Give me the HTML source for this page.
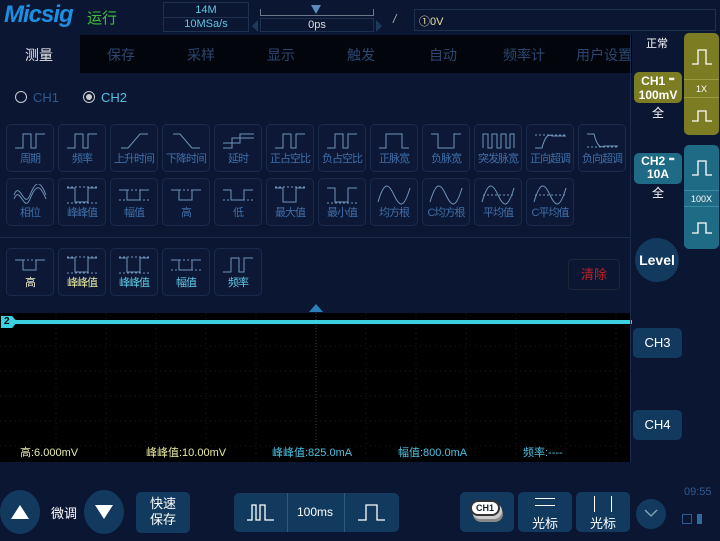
<!DOCTYPE html>
<html><head><meta charset="utf-8"><style>
*{margin:0;padding:0;box-sizing:border-box}
body{width:720px;height:541px;background:#0b1633;font-family:"Liberation Sans","Noto Sans CJK SC",sans-serif;position:relative;overflow:hidden;color:#fff}
.a{position:absolute}
.btn{position:absolute;width:48px;height:48px;border:1px solid #1a2a4c;border-radius:5px;background:#0c1836;text-align:center;font-size:11px;color:#3f6fa8;line-height:1}
.btn svg{display:block;margin:5px auto 2px}
.btn span{letter-spacing:-1px}
.tab{position:absolute;top:45px;font-size:14px;color:#2a4870}
.meas{position:absolute;top:444px;font-size:11px}
.rbox{position:absolute;border-radius:5px;font-weight:bold;text-align:center}
</style></head><body>
<div class="a" style="left:4px;top:1px;font-size:24px;font-weight:bold;font-style:italic;color:#1e8fe0;letter-spacing:-1px">Micsig</div>
<div class="a" style="left:87px;top:7px;font-size:15px;color:#3fbf3f">运行</div>
<div class="a" style="left:163px;top:2px;width:86px;height:30px;border:1px solid #1d3050;font-size:11px;color:#5fc7e0;text-align:center;line-height:14px">14M<br>10MSa/s<div style="position:absolute;left:0;right:0;top:14px;border-top:1px solid #1d3050"></div></div>
<div class="a" style="left:260px;top:9px;width:114px;height:7px;border:1px solid #6a7a8a;border-top:none;border-bottom:1px solid #6a7a8a"></div>
<div class="a" style="left:311px;top:5px;width:0;height:0;border-left:5px solid transparent;border-right:5px solid transparent;border-top:9px solid #5a8cb8"></div>
<div class="a" style="left:260px;top:18px;width:114px;height:14px;border:1px solid #1d3050;font-size:11px;color:#ddd;text-align:center;line-height:12px">0ps</div>
<div class="a" style="left:252px;top:20px;border-top:6px solid transparent;border-bottom:6px solid transparent;border-right:6px solid #1d3a5c"></div>
<div class="a" style="left:376px;top:20px;border-top:6px solid transparent;border-bottom:6px solid transparent;border-left:6px solid #1d3a5c"></div>
<div class="a" style="left:393px;top:12px;font-size:12px;color:#aaa;font-style:italic">/</div>
<div class="a" style="left:414px;top:9px;width:302px;height:22px;border:1px solid #1d3050;font-size:11px;color:#e8e0a0;padding:3px 4px">①0V</div>
<div class="a" style="left:80px;top:35px;width:552px;height:38px;background:#02050c"></div>
<div class="tab" style="left:25px;color:#e8e8e8">测量</div>
<div class="tab" style="left:107px">保存</div>
<div class="tab" style="left:187px">采样</div>
<div class="tab" style="left:267px">显示</div>
<div class="tab" style="left:347px">触发</div>
<div class="tab" style="left:429px">自动</div>
<div class="tab" style="left:503px">频率计</div>
<div class="tab" style="left:576px">用户设置</div>
<div class="a" style="left:15px;top:91px;width:12px;height:12px;border:1.5px solid #ccc;border-radius:50%"></div>
<div class="a" style="left:33px;top:90px;font-size:13px;color:#2f5a90">CH1</div>
<div class="a" style="left:83px;top:91px;width:12px;height:12px;border:1.5px solid #ccc;border-radius:50%"><div style="margin:2px;width:6px;height:6px;background:#ccc;border-radius:50%"></div></div>
<div class="a" style="left:101px;top:90px;font-size:13px;color:#4fc0e0">CH2</div>
<div class="btn" style="left:6px;top:124px"><svg width="36" height="22"><path d="M3 18H11V4H19V18H24V4H33" fill="none" stroke="#6f93b8"/></svg><span>周期</span></div>
<div class="btn" style="left:58px;top:124px"><svg width="36" height="22"><path d="M3 18H11V4H19V18H24V4H33" fill="none" stroke="#6f93b8"/></svg><span>频率</span></div>
<div class="btn" style="left:110px;top:124px"><svg width="36" height="22"><path d="M5 18H12L24 4H32" fill="none" stroke="#6f93b8"/></svg><span>上升时间</span></div>
<div class="btn" style="left:162px;top:124px"><svg width="36" height="22"><path d="M5 4H12L24 18H32" fill="none" stroke="#6f93b8"/></svg><span>下降时间</span></div>
<div class="btn" style="left:214px;top:124px"><svg width="36" height="22"><path d="M3 18H12V8H34M3 13H20V4H34" fill="none" stroke="#6f93b8"/></svg><span>延时</span></div>
<div class="btn" style="left:266px;top:124px"><svg width="36" height="22"><path d="M3 18H11V4H19V18H24V4H33" fill="none" stroke="#6f93b8"/></svg><span>正占空比</span></div>
<div class="btn" style="left:318px;top:124px"><svg width="36" height="22"><path d="M3 18H11V4H19V18H24V4H33" fill="none" stroke="#6f93b8"/></svg><span>负占空比</span></div>
<div class="btn" style="left:370px;top:124px"><svg width="36" height="22"><path d="M3 18H10V4H26V18H33" fill="none" stroke="#6f93b8"/></svg><span>正脉宽</span></div>
<div class="btn" style="left:422px;top:124px"><svg width="36" height="22"><path d="M3 4H10V18H26V4H33" fill="none" stroke="#6f93b8"/></svg><span>负脉宽</span></div>
<div class="btn" style="left:474px;top:124px"><svg width="36" height="22"><path d="M3 18V4H8V18H12V4H17V18H21V4H26V18H30V4H34V18" fill="none" stroke="#6f93b8"/></svg><span>突发脉宽</span></div>
<div class="btn" style="left:526px;top:124px"><svg width="36" height="22"><path d="M3 18H10Q14 2 20 6H34" fill="none" stroke="#6f93b8"/><path d="M3 5H34" stroke="#6f93b8" stroke-dasharray="2 2"/></svg><span>正向超调</span></div>
<div class="btn" style="left:578px;top:124px"><svg width="36" height="22"><path d="M3 4H10Q14 20 20 16H34" fill="none" stroke="#6f93b8"/><path d="M3 17H34" stroke="#6f93b8" stroke-dasharray="2 2"/></svg><span>负向超调</span></div>
<div class="btn" style="left:6px;top:178px"><svg width="36" height="22"><path d="M2 11C8 -4 12 26 18 11S28 -4 34 11M2 15C8 0 12 30 18 15S28 0 34 15" fill="none" stroke="#6f93b8"/></svg><span>相位</span></div>
<div class="btn" style="left:58px;top:178px"><svg width="36" height="22"><path d="M3 4H11V18H24V4H33" fill="none" stroke="#6f93b8"/><path d="M3 3H34M3 19H34" stroke="#6f93b8" stroke-dasharray="2 2"/></svg><span>峰峰值</span></div>
<div class="btn" style="left:110px;top:178px"><svg width="36" height="22"><path d="M3 6H11V16H24V6H33" fill="none" stroke="#6f93b8"/><path d="M3 6H34M3 16H34" stroke="#6f93b8" stroke-dasharray="2 2"/></svg><span>幅值</span></div>
<div class="btn" style="left:162px;top:178px"><svg width="36" height="22"><path d="M3 6H11V16H24V6H33" fill="none" stroke="#6f93b8"/><path d="M3 6H34" stroke="#6f93b8" stroke-dasharray="2 2"/></svg><span>高</span></div>
<div class="btn" style="left:214px;top:178px"><svg width="36" height="22"><path d="M3 6H11V16H24V6H33" fill="none" stroke="#6f93b8"/><path d="M3 16H34" stroke="#6f93b8" stroke-dasharray="2 2"/></svg><span>低</span></div>
<div class="btn" style="left:266px;top:178px"><svg width="36" height="22"><path d="M3 4H11V18H24V4H33" fill="none" stroke="#6f93b8"/><path d="M3 3H34" stroke="#6f93b8" stroke-dasharray="2 2"/></svg><span>最大值</span></div>
<div class="btn" style="left:318px;top:178px"><svg width="36" height="22"><path d="M3 4H11V18H24V4H33" fill="none" stroke="#6f93b8"/><path d="M3 19H34" stroke="#6f93b8" stroke-dasharray="2 2"/></svg><span>最小值</span></div>
<div class="btn" style="left:370px;top:178px"><svg width="36" height="22"><path d="M2 18C8 -2 12 -2 18 11S28 24 34 4" fill="none" stroke="#6f93b8"/></svg><span>均方根</span></div>
<div class="btn" style="left:422px;top:178px"><svg width="36" height="22"><path d="M2 18C8 -2 12 -2 18 11S28 24 34 4" fill="none" stroke="#6f93b8"/></svg><span>C均方根</span></div>
<div class="btn" style="left:474px;top:178px"><svg width="36" height="22"><path d="M2 18C8 -2 12 -2 18 11S28 24 34 4" fill="none" stroke="#6f93b8"/><path d="M3 11H34" stroke="#6f93b8" stroke-dasharray="2 2"/></svg><span>平均值</span></div>
<div class="btn" style="left:526px;top:178px"><svg width="36" height="22"><path d="M2 18C8 -2 12 -2 18 11S28 24 34 4" fill="none" stroke="#6f93b8"/><path d="M3 11H34" stroke="#6f93b8" stroke-dasharray="2 2"/></svg><span>C平均值</span></div>
<div class="a" style="left:0;top:237px;width:630px;border-top:1px solid #1a2a4c"></div>
<div class="btn" style="left:6px;top:248px;color:#f0f0d0"><svg width="36" height="22"><path d="M3 6H11V16H24V6H33" fill="none" stroke="#6f93b8"/><path d="M3 6H34" stroke="#6f93b8" stroke-dasharray="2 2"/></svg><span>高</span></div>
<div class="btn" style="left:58px;top:248px;color:#e8e8a0"><svg width="36" height="22"><path d="M3 4H11V18H24V4H33" fill="none" stroke="#6f93b8"/><path d="M3 3H34M3 19H34" stroke="#6f93b8" stroke-dasharray="2 2"/></svg><span>峰峰值</span></div>
<div class="btn" style="left:110px;top:248px;color:#5fc7e0"><svg width="36" height="22"><path d="M3 4H11V18H24V4H33" fill="none" stroke="#6f93b8"/><path d="M3 3H34M3 19H34" stroke="#6f93b8" stroke-dasharray="2 2"/></svg><span>峰峰值</span></div>
<div class="btn" style="left:162px;top:248px;color:#5fc7e0"><svg width="36" height="22"><path d="M3 6H11V16H24V6H33" fill="none" stroke="#6f93b8"/><path d="M3 6H34M3 16H34" stroke="#6f93b8" stroke-dasharray="2 2"/></svg><span>幅值</span></div>
<div class="btn" style="left:214px;top:248px;color:#5fc7e0"><svg width="36" height="22"><path d="M3 18H11V4H19V18H24V4H33" fill="none" stroke="#6f93b8"/></svg><span>频率</span></div>
<div class="a" style="left:568px;top:259px;width:52px;height:31px;border:1px solid #1f2438;border-radius:4px;color:#c02020;font-size:13px;text-align:center;line-height:29px">清除</div>
<div class="a" style="left:309px;top:304px;border-left:7px solid transparent;border-right:7px solid transparent;border-bottom:8px solid #2d7fb8"></div>
<div class="a" style="left:0;top:313px;width:631px;height:149px;background:#000"></div>
<svg class="a" style="left:0;top:313px" width="631" height="149">
<g stroke="#1e1e1e" stroke-dasharray="1 4">
<path d="M56 0V149M106 0V149M156 0V149M206 0V149M256 0V149M366 0V149M416 0V149M466 0V149M516 0V149M566 0V149M616 0V149"/>
<path d="M0 33H631M0 58H631M0 83H631M0 108H631M0 133H631"/>
</g>
<path d="M316 0V149" stroke="#3a3a3a" stroke-dasharray="1 2"/>
</svg>
<div class="a" style="left:8px;top:320px;width:624px;height:4px;background:#3ad0e0"></div>
<div class="a" style="left:1px;top:316px;width:16px;height:12px;background:#3ad0e0;clip-path:polygon(0 0,70% 0,100% 50%,70% 100%,0 100%);font-size:10px;color:#000;padding-left:3px;line-height:12px;font-weight:bold">2</div>
<div class="meas" style="left:20px;color:#e8e8b0">高:6.000mV</div>
<div class="meas" style="left:146px;color:#e8e8a0">峰峰值:10.00mV</div>
<div class="meas" style="left:272px;color:#4fc0e0">峰峰值:825.0mA</div>
<div class="meas" style="left:398px;color:#4fc0e0">幅值:800.0mA</div>
<div class="meas" style="left:523px;color:#4fc0e0">频率:----</div>
<div class="a" style="left:630px;top:35px;height:427px;border-left:1px solid #1a2a4c"></div>
<div class="a" style="left:646px;top:35px;font-size:11px;color:#fff">正常</div>
<div class="a" style="left:684px;top:33px;width:35px;height:102px;background:#7c7c22;border-radius:5px"></div>
<svg class="a" style="left:690px;top:47px" width="24" height="20"><path d="M2 17H8V3H16V17H22" fill="none" stroke="#fff" stroke-width="1.3"/></svg>
<div class="a" style="left:684px;top:79px;width:35px;border-top:1px solid #9a9a40;font-size:9px;color:#fff;text-align:center;padding-top:4px">1X</div>
<div class="a" style="left:684px;top:97px;width:35px;border-top:1px solid #9a9a40"></div>
<svg class="a" style="left:690px;top:108px" width="24" height="16"><path d="M2 13H8V3H16V13H22" fill="none" stroke="#fff" stroke-width="1.3"/></svg>
<div class="rbox" style="left:634px;top:72px;width:48px;height:31px;background:#7c7c22;font-size:12px;line-height:14px;padding-top:2px">CH1 ⁼<br>100mV</div>
<div class="a" style="left:652px;top:104px;font-size:12px">全</div>
<div class="a" style="left:684px;top:145px;width:35px;height:104px;background:#1f6a85;border-radius:5px"></div>
<svg class="a" style="left:690px;top:158px" width="24" height="20"><path d="M2 17H8V3H16V17H22" fill="none" stroke="#fff" stroke-width="1.3"/></svg>
<div class="a" style="left:684px;top:190px;width:35px;border-top:1px solid #3a8aa5;font-size:9px;color:#fff;text-align:center;padding-top:3px">100X</div>
<div class="a" style="left:684px;top:206px;width:35px;border-top:1px solid #3a8aa5"></div>
<svg class="a" style="left:690px;top:220px" width="24" height="16"><path d="M2 13H8V3H16V13H22" fill="none" stroke="#fff" stroke-width="1.3"/></svg>
<div class="rbox" style="left:634px;top:153px;width:48px;height:31px;background:#1f6a85;font-size:12px;line-height:13px;padding-top:2px">CH2 ⁼<br>10A</div>
<div class="a" style="left:652px;top:184px;font-size:12px">全</div>
<div class="a" style="left:635px;top:238px;width:44px;height:44px;border-radius:50%;background:#123a5e;text-align:center;font-size:14px;font-weight:bold;line-height:44px">Level</div>
<div class="rbox" style="left:633px;top:328px;width:49px;height:30px;background:#123a5e;font-size:13px;font-weight:normal;line-height:30px">CH3</div>
<div class="rbox" style="left:633px;top:410px;width:49px;height:30px;background:#123a5e;font-size:13px;font-weight:normal;line-height:30px">CH4</div>
<div class="a" style="left:0;top:490px;width:40px;height:44px;border-radius:50%;background:#123a5e"></div>
<div class="a" style="left:11px;top:505px;border-left:9px solid transparent;border-right:9px solid transparent;border-bottom:14px solid #fff"></div>
<div class="a" style="left:51px;top:503px;font-size:13px">微调</div>
<div class="a" style="left:84px;top:490px;width:40px;height:44px;border-radius:50%;background:#123a5e"></div>
<div class="a" style="left:95px;top:505px;border-left:9px solid transparent;border-right:9px solid transparent;border-top:14px solid #fff"></div>
<div class="a" style="left:136px;top:492px;width:54px;height:41px;border-radius:5px;background:#123a5e;font-size:13px;text-align:center;line-height:16px;padding-top:4px">快速<br>保存</div>
<div class="a" style="left:234px;top:493px;width:165px;height:39px;border-radius:5px;background:#123a5e"></div>
<div class="a" style="left:287px;top:493px;height:39px;border-left:1px solid #2a5a80"></div>
<div class="a" style="left:344px;top:493px;height:39px;border-left:1px solid #2a5a80"></div>
<svg class="a" style="left:246px;top:502px" width="30" height="20"><path d="M1 18H6V3H10V18H14V3H19V18H28" fill="none" stroke="#fff" stroke-width="1.3"/></svg>
<div class="a" style="left:297px;top:505px;font-size:12px">100ms</div>
<svg class="a" style="left:357px;top:502px" width="30" height="20"><path d="M1 18H9V3H20V18H28" fill="none" stroke="#fff" stroke-width="1.3"/></svg>
<div class="a" style="left:460px;top:492px;width:54px;height:40px;border-radius:5px;background:#123a5e"></div>
<div class="a" style="left:470px;top:500px;width:30px;height:16px;border-radius:8px;background:#fff;border:2px solid #333;color:#123;font-size:9px;font-weight:bold;text-align:center;line-height:12px;box-shadow:2px 3px 0 #ccc,3px 6px 0 #888">CH1</div>
<div class="a" style="left:518px;top:492px;width:54px;height:40px;border-radius:5px;background:#123a5e;text-align:center;font-size:13px;padding-top:21px">光标</div>
<div class="a" style="left:535px;top:498px;width:20px;border-top:1.5px solid #fff;height:8px;border-bottom:1.5px solid #fff"></div>
<div class="a" style="left:576px;top:492px;width:54px;height:40px;border-radius:5px;background:#123a5e;text-align:center;font-size:13px;padding-top:21px">光标</div>
<div class="a" style="left:594px;top:496px;width:18px;height:16px;border-left:1.5px solid #fff;border-right:1.5px solid #fff"></div>
<div class="a" style="left:636px;top:499px;width:30px;height:30px;border-radius:50%;background:#123a5e"></div>
<svg class="a" style="left:643px;top:508px" width="16" height="10"><path d="M2 2L8 8L14 2" fill="none" stroke="#8ab" stroke-width="1.3"/></svg>
<div class="a" style="left:684px;top:486px;font-size:11px;color:#2f5a90">09:55</div>
<div class="a" style="left:682px;top:514px;width:10px;height:10px;border:1px solid #2f5a90"></div>
<div class="a" style="left:697px;top:514px;width:5px;height:10px;background:#2f6a9a"></div>
</body></html>
